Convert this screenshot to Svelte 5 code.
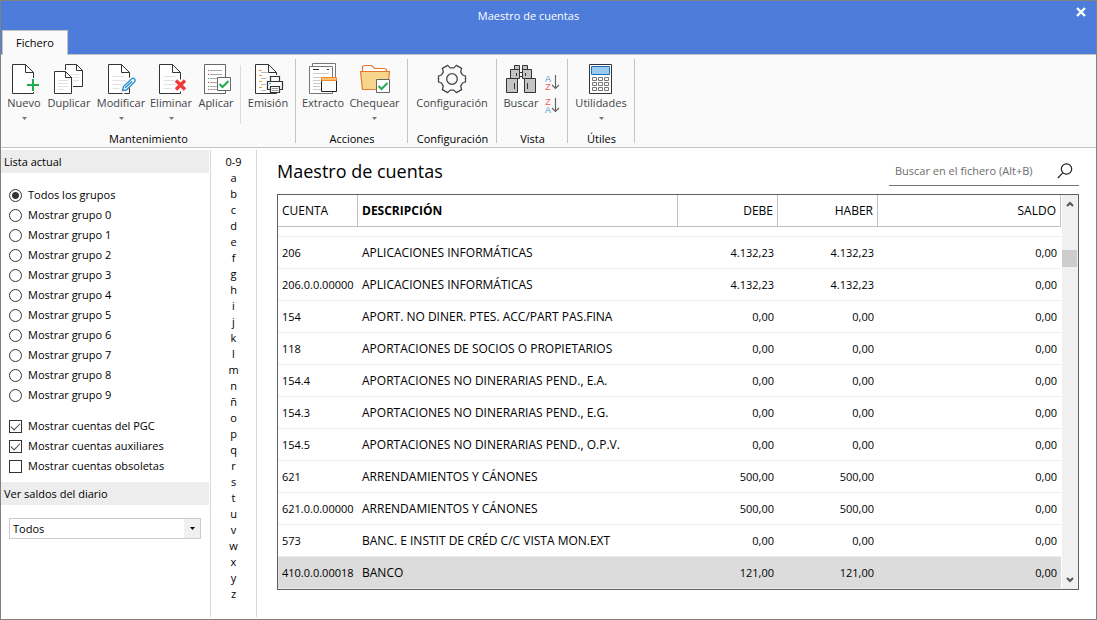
<script lang="ts">
	type Tool = { id: string; label: string; width: number; menu?: boolean; split?: boolean };

	const groups: { name: string; tools: Tool[] }[] = [
		{
			name: 'Mantenimiento',
			tools: [
				{ id: 'new', label: 'Nuevo', width: 38, menu: true },
				{ id: 'copy', label: 'Duplicar', width: 52 },
				{ id: 'edit', label: 'Modificar', width: 52, menu: true },
				{ id: 'delete', label: 'Eliminar', width: 48, menu: true },
				{ id: 'apply', label: 'Aplicar', width: 42 },
				{ id: 'print', label: 'Emisión', width: 46, split: true }
			]
		},
		{
			name: 'Acciones',
			tools: [
				{ id: 'extract', label: 'Extracto', width: 46 },
				{ id: 'check', label: 'Chequear', width: 57, menu: true }
			]
		},
		{ name: 'Configuración', tools: [{ id: 'config', label: 'Configuración', width: 80 }] },
		{
			name: 'Vista',
			tools: [
				{ id: 'search', label: 'Buscar', width: 40 },
				{ id: 'sort', label: '', width: 22 }
			]
		},
		{ name: 'Útiles', tools: [{ id: 'calc', label: 'Utilidades', width: 58, menu: true }] }
	];

	const filters = ['Todos los grupos', ...Array.from({ length: 10 }, (_, i) => `Mostrar grupo ${i}`)];
	const letters = ['0-9', ...'abcdefghijklmnñopqrstuvwxyz'];

	const rows = [
		['206', 'APLICACIONES INFORMÁTICAS', '4.132,23', '4.132,23', '0,00'],
		['206.0.0.00000', 'APLICACIONES INFORMÁTICAS', '4.132,23', '4.132,23', '0,00'],
		['154', 'APORT. NO DINER. PTES. ACC/PART PAS.FINA', '0,00', '0,00', '0,00'],
		['118', 'APORTACIONES DE SOCIOS O PROPIETARIOS', '0,00', '0,00', '0,00'],
		['154.4', 'APORTACIONES NO DINERARIAS PEND., E.A.', '0,00', '0,00', '0,00'],
		['154.3', 'APORTACIONES NO DINERARIAS PEND., E.G.', '0,00', '0,00', '0,00'],
		['154.5', 'APORTACIONES NO DINERARIAS PEND., O.P.V.', '0,00', '0,00', '0,00'],
		['621', 'ARRENDAMIENTOS Y CÁNONES', '500,00', '500,00', '0,00'],
		['621.0.0.00000', 'ARRENDAMIENTOS Y CÁNONES', '500,00', '500,00', '0,00'],
		['573', 'BANC. E INSTIT DE CRÉD C/C VISTA MON.EXT', '0,00', '0,00', '0,00'],
		['410.0.0.00018', 'BANCO', '121,00', '121,00', '0,00']
	];

	let group = $state('Todos los grupos');
	let pgc = $state(true);
	let auxiliary = $state(true);
	let obsolete = $state(false);
	let selected = $state(10);
	let balance = $state('Todos');
	let query = $state('');
</script>

{#snippet page(x: number)}
	<path d="M{x + 13} 2.5H{x}V31.5H{x + 21}V10.5L{x + 13} 2.5V10.5H{x + 21}" fill="#fff" stroke="#333" />
{/snippet}

{#snippet pageLines(x: number)}
	<path d="M{x + 4} 14.5h12M{x + 4} 18.5h13M{x + 4} 22.5h13M{x + 4} 26.5h8" stroke="#e2e2e2" />
{/snippet}

{#snippet icon(id: string)}
	<svg class="icon" width="32" height="32" viewBox="0 0 32 32" fill="none" aria-hidden="true">
		{#if id === 'new'}
			{@render page(4.5)}
			<path d="M25 16v14M18 23h14" stroke="#fafafa" stroke-width="6" />
			<path d="M25 17v12M19 23h12" stroke="#1faa50" stroke-width="2" />
		{:else if id === 'copy'}
			<path d="M23.5 2.5H12.5V24.5H29.5V8.5L23.5 2.5V8.5H29.5" fill="#fff" stroke="#333" />
			<path d="M18 12.5h8M20 15.5h6M20 18.5h6" stroke="#e2e2e2" />
			<path d="M0 8h13l7 7v17H0z" fill="#fafafa" />
			<path d="M12.5 9.5H1.5V31.5H18.5V15.5L12.5 9.5V15.5H18.5" fill="#fff" stroke="#333" />
			<path d="M5 18.5h10M5 21.5h10M5 24.5h10M5 27.5h6" stroke="#e2e2e2" />
		{:else if id === 'edit'}
			{@render page(3.5)}
			{@render pageLines(3.5)}
			<path d="M16 30l13-14" stroke="#fafafa" stroke-width="7" />
			<path d="M17.5 28.5l1-4L27 16.6q1.5-.8 2.6.4t.2 2.6L21.5 28l-4 .5zM20 26l7-6.8" fill="#fff" stroke="#2e8fd0" stroke-width="1.4" />
		{:else if id === 'delete'}
			{@render page(4.5)}
			{@render pageLines(4.5)}
			<path d="M20 17.5h12v12H20z" fill="#fafafa" />
			<path d="M21 18.5l9 9M30 18.5l-9 9" stroke="#ef3a3a" stroke-width="3.4" />
		{:else if id === 'apply'}
			<path d="M4.5 2.5h21v29h-21z" fill="#fff" stroke="#666" />
			<path d="M10 8.5h12M10 12.5h12M10 16.5h12M10 20.5h12M10 24.5h12M10 27.5h12" stroke="#aaa" />
			<path d="M8 8.5h1M8 16.5h1M8 24.5h1" stroke="#1f9a45" />
			<path d="M8 12.5h1M8 20.5h1M8 27.5h1" stroke="#d22" />
			<path d="M17.5 15.5h13v13h-13z" fill="#fff" stroke="#666" />
			<path d="M19.5 22l3 3 6-6" stroke="#1faa50" stroke-width="2" />
		{:else if id === 'print'}
			<path d="M16.5 2.5H3.5V31.5H24.5V10.5L16.5 2.5V10.5H24.5" fill="#fff" stroke="#333" />
			<path d="M7 8.5h3M7 13.5h3M7 19.5h3M7 25.5h3" stroke="#f0a020" />
			<path d="M9 10.5h7M9 16.5h6M9 22.5h6M9 28.5h6" stroke="#bbb" />
			<path d="M14 13h18v18H14z" fill="#fafafa" />
			<path d="M18.5 19.5v-5h9v5M18.5 27.5h-3v-8h15v8h-3M18.5 24.5h9v6h-9z" stroke="#333" stroke-width="1.2" />
			<path d="M20 26.5h6M20 28.5h6" stroke="#999" />
			<path d="M17 21.5h2" stroke="#2e8fd0" />
		{:else if id === 'extract'}
			<path d="M5.5 1.5h23v27h-23z" fill="#fff" stroke="#777" />
			<path d="M2.5 4.5h23v27h-23z" fill="#fff" stroke="#777" />
			<path d="M6 7.5h6M20 7.5h2" stroke="#333" />
			<path d="M6 11.5h16M6 15.5h8M6 18.5h7M6 21.5h8M6 24.5h7M6 27.5h8" stroke="#ccc" />
			<path d="M14.5 18.5h15v11h-15z" fill="#fff" stroke="#222" />
			<path d="M14.5 15.5h15v3h-15z" fill="#ffc070" stroke="#ef8a2c" />
		{:else if id === 'check'}
			<path d="M3.5 10V4.5l2-1h7l3 3h10l2 1V10" fill="#fff" stroke="#e8762c" stroke-width="1.2" />
			<path d="M3.5 27.5l-2-18h29l-2 18z" fill="#f6d68a" stroke="#e8762c" stroke-width="1.2" />
			<path d="M17.5 17.5h13v13h-13z" fill="#fff" stroke="#666" />
			<path d="M19.5 24l3 3 6-6" stroke="#1faa50" stroke-width="2" />
		{:else if id === 'config'}
			<g transform="translate(16 17)" stroke="#444" stroke-width="1.3" stroke-linejoin="round">
				<path d="M10.5-4L13.5-3V3L10.5 4L8.7 7.1L9.6 10.6L4.4 13.6L1.8 11.1H-1.8L-4.4 13.6L-9.6 10.6L-8.7 7.1L-10.5 4L-13.5 3V-3L-10.5-4L-8.7-7.1L-9.6-10.6L-4.4-13.6L-1.8-11.1H1.8L4.4-13.6L9.6-10.6L8.7-7.1Z" />
				<circle r="5.3" />
			</g>
		{:else if id === 'search'}
			<g fill="#c4c4c4" stroke="#333">
				<path d="M14.5 10.5h3v4h-3z" fill="#fff" />
				<path d="M9.5 3.5h5v4h-5zM17.5 3.5h5v4h-5z" />
				<path d="M5.5 7.5h9v9h-9zM17.5 7.5h9v9h-9z" />
				<path d="M1.5 16.5h11v14h-11zM19.5 16.5h11v14h-11z" />
				<path d="M9.5 21v6M22.5 21v6M11.5 11v3M20.5 11v3" />
			</g>
		{:else if id === 'calc'}
			<path d="M4.5 2.5h22v29h-22z" fill="#fff" stroke="#333" />
			<path d="M6.5 4.5h18v8h-18z" fill="#9accf0" stroke="#1d6fb5" />
			{#each [15.5, 20.5, 25.5] as y}
				<path d="M7.5 {y}h4v3h-4zM13.5 {y}h4v3h-4zM19.5 {y}h4v3h-4z" stroke="#777" />
			{/each}
		{/if}
	</svg>
{/snippet}

{#snippet sortIcon(top: string, bottom: string)}
	<svg width="18" height="18" viewBox="0 0 18 18" aria-hidden="true">
		<text x="5" y="8" class:a={top === 'A'}>{top}</text>
		<text x="5" y="16" class:a={bottom === 'A'}>{bottom}</text>
		<path d="M12.5 1v13M9 11l3.5 3.5L16 11" fill="none" stroke="#666" stroke-width="1.2" />
	</svg>
{/snippet}

<div class="window">
	<header class="titlebar">
		<div class="caption">
			<span class="caption-text">Maestro de cuentas</span>
			<button class="close" aria-label="Cerrar">
				<svg width="10" height="10" viewBox="0 0 10 10"><path d="M1 1l8 8M9 1l-8 8" stroke="#fff" stroke-width="2.4" /></svg>
			</button>
		</div>
		<button class="tab">Fichero</button>
	</header>

	<nav class="ribbon">
		{#each groups as g}
			<section class="group">
				<div class="tools">
					{#each g.tools as tool}
						{#if tool.id === 'sort'}
							<div class="sorts" style:width="{tool.width}px">
								<button aria-label="Orden ascendente">{@render sortIcon('A', 'Z')}</button>
								<button aria-label="Orden descendente">{@render sortIcon('Z', 'A')}</button>
							</div>
						{:else}
							{#if tool.split}<span class="split"></span>{/if}
							<button class="tool" style:width="{tool.width}px">
								{@render icon(tool.id)}
								<span>{tool.label}</span>
								{#if tool.menu}
									<svg class="arrow" width="5" height="3" viewBox="0 0 5 3"><path d="M0 0h5L2.5 3z" fill="#777" /></svg>
								{/if}
							</button>
						{/if}
					{/each}
				</div>
				<h2>{g.name}</h2>
			</section>
		{/each}
	</nav>

	<div class="body">
		<aside class="sidebar">
			<h3>Lista actual</h3>
			<div class="options">
				{#each filters as f}
					<label><input type="radio" name="group" value={f} bind:group />{f}</label>
				{/each}
			</div>
			<div class="options checks">
				<label><input type="checkbox" bind:checked={pgc} />Mostrar cuentas del PGC</label>
				<label><input type="checkbox" bind:checked={auxiliary} />Mostrar cuentas auxiliares</label>
				<label><input type="checkbox" bind:checked={obsolete} />Mostrar cuentas obsoletas</label>
			</div>
			<h3 id="balance-title">Ver saldos del diario</h3>
			<div class="select">
				<select bind:value={balance} aria-labelledby="balance-title">
					<option>Todos</option>
				</select>
				<span class="drop"><svg width="5" height="3" viewBox="0 0 5 3"><path d="M0 0h5L2.5 3z" /></svg></span>
			</div>
		</aside>

		<div class="letters">
			{#each letters as l}
				<button>{l}</button>
			{/each}
		</div>

		<main>
			<div class="head">
				<h1>Maestro de cuentas</h1>
				<div class="search">
					<input type="text" bind:value={query} placeholder="Buscar en el fichero (Alt+B)" aria-label="Buscar en el fichero" />
					<button aria-label="Buscar">
						<svg width="16" height="16" viewBox="0 0 16 16" fill="none" stroke="#222" stroke-width="1.2">
							<circle cx="9.5" cy="6" r="5.2" />
							<path d="M5.8 9.8L.8 15" />
						</svg>
					</button>
				</div>
			</div>

			<div class="grid">
				<table>
					<colgroup>
						<col class="c-account" /><col class="c-desc" /><col class="c-num" /><col class="c-num" /><col />
					</colgroup>
					<thead>
						<tr>
							<th>CUENTA</th>
							<th class="sorted">DESCRIPCIÓN</th>
							<th class="num">DEBE</th>
							<th class="num">HABER</th>
							<th class="num">SALDO</th>
						</tr>
					</thead>
					<tbody>
						<tr class="cut"><td colspan="5"></td></tr>
						{#each rows as row, i}
							<tr class:selected={i === selected} onclick={() => (selected = i)}>
								{#each row as cell, c}
									<td class:digits={c !== 1} class:num={c > 1}>{cell}</td>
								{/each}
							</tr>
						{/each}
					</tbody>
				</table>
				<div class="scroll">
					<button aria-label="Subir">
						<svg width="8" height="6" viewBox="0 0 8 6"><path d="M1 5l3-3 3 3" fill="none" stroke="#555" stroke-width="2" /></svg>
					</button>
					<div class="track"><div class="thumb"></div></div>
					<button aria-label="Bajar">
						<svg width="8" height="6" viewBox="0 0 8 6"><path d="M1 1l3 3 3-3" fill="none" stroke="#555" stroke-width="2" /></svg>
					</button>
				</div>
			</div>
		</main>
	</div>
</div>

<style>
	.window {
		box-sizing: border-box;
		min-height: 100vh;
		display: flex;
		flex-direction: column;
		border: 1px solid #808080;
		background: #fff;
		color: #000;
		font: 11px/16px "Segoe UI", "Open Sans", "Noto Sans", sans-serif;
	}
	button {
		font: inherit;
		color: inherit;
		background: none;
		border: 0;
		padding: 0;
		cursor: pointer;
	}
	svg {
		display: block;
	}
	h1, h2, h3 {
		margin: 0;
		font-size: 11px;
		font-weight: 400;
	}

	.titlebar {
		background: #4d7cdb;
		border-bottom: 1px solid #c4c4c4;
	}
	.caption {
		display: flex;
		height: 29px;
	}
	.caption-text {
		flex: 1;
		text-align: center;
		color: #fff;
		line-height: 30px;
	}
	.close {
		width: 40px;
		padding-left: 20px;
		padding-bottom: 8px;
	}
	.tab {
		display: block;
		width: 66px;
		height: 25px;
		margin: 0 0 -1px 1px;
		background: #fafafa;
		border: 1px solid #c4c4c4;
		border-bottom: 0;
	}

	.ribbon {
		display: flex;
		background: #fafafa;
		border-bottom: 1px solid #c4c4c4;
		padding: 4px 0;
	}
	.group {
		display: flex;
		flex-direction: column;
		padding: 0 4px;
		border-right: 1px solid #c4c4c4;
	}
	.group h2 {
		text-align: center;
		white-space: nowrap;
		line-height: 8px;
		margin: 0 -4px 0 -3px;
	}
	.tools {
		display: flex;
		height: 69px;
		padding-top: 3px;
		box-sizing: border-box;
		margin-bottom: 7px;
	}
	.tool {
		display: flex;
		flex-direction: column;
		align-items: center;
		color: #444;
		white-space: nowrap;
	}
	.tool span {
		margin-top: 1px;
	}
	.arrow {
		margin-top: 6px;
	}
	.split {
		width: 1px;
		height: 59px;
		margin: 3px 4px 0 3px;
		background: #dcdcdc;
	}
	.sorts {
		display: flex;
		flex-direction: column;
		align-items: center;
		gap: 5px;
		padding-top: 12px;
	}
	.sorts text {
		font-family: "Liberation Sans", Arial, sans-serif;
		font-size: 9px;
		text-anchor: middle;
		fill: #ee6060;
	}
	.sorts text.a {
		fill: #3f9bd8;
	}

	.body {
		flex: 1;
		display: flex;
		padding: 2px 0;
	}
	.sidebar {
		width: 208px;
	}
	.sidebar h3 {
		background: #ededed;
		padding: 0 3px;
		line-height: 23px;
	}
	.options {
		padding: 12px 8px 0;
	}
	.options.checks {
		padding: 11px 8px 6px;
	}
	.options label {
		display: flex;
		align-items: center;
		gap: 6px;
		height: 20px;
	}
	.options input {
		appearance: none;
		box-sizing: border-box;
		width: 13px;
		height: 13px;
		margin: 0;
		border: 1px solid #333;
		background: #fff;
		flex: none;
	}
	.options input[type='radio'] {
		border-radius: 50%;
	}
	.options input[type='radio']:checked {
		background: radial-gradient(circle, #333 3px, #fff 4px);
	}
	.options input[type='checkbox']:checked::before {
		content: '';
		display: block;
		width: 8px;
		height: 4px;
		margin: 2px 0 0 1px;
		border: solid #444;
		border-width: 0 0 1px 1px;
		transform: rotate(-45deg);
	}
	.select {
		position: relative;
		margin: 13px 8px 0;
	}
	.select select {
		appearance: none;
		display: block;
		width: 100%;
		height: 21px;
		padding: 0 20px 0 3px;
		border: 1px solid #ccc;
		border-radius: 0;
		background: #fff;
		color: #000;
		font: inherit;
	}
	.drop {
		position: absolute;
		inset: 1px 1px 1px auto;
		width: 16px;
		display: grid;
		place-items: center;
		background: #f0f0f0;
		pointer-events: none;
	}

	.letters {
		display: flex;
		flex-direction: column;
		width: 45px;
		margin-left: 1px;
		padding-top: 4px;
		border: solid #d8d8d8;
		border-width: 0 1px;
	}
	.letters button {
		height: 16px;
	}

	main {
		flex: 1;
		min-width: 0;
		padding: 4px 17px 0 20px;
	}
	.head {
		display: flex;
		justify-content: space-between;
		margin-bottom: 6px;
	}
	h1 {
		font-size: 18px;
		line-height: 34px;
	}
	.search {
		display: flex;
		align-items: center;
		width: 190px;
		height: 32px;
		box-sizing: border-box;
		padding: 2px 6px 0 6px;
		border-bottom: 1px solid #777;
	}
	.search input {
		flex: 1;
		min-width: 0;
		padding: 0;
		border: 0;
		outline: 0;
		background: none;
		font: inherit;
	}
	.search input::placeholder {
		color: #6d6d6d;
		opacity: 1;
	}

	.grid {
		display: flex;
		border: 1px solid #606060;
	}
	table {
		flex: 1;
		width: 100%;
		table-layout: fixed;
		border-collapse: separate;
		border-spacing: 0;
		font-size: 12px;
		line-height: 16px;
		margin-right: 1px;
	}
	.c-account {
		width: 80px;
	}
	.c-desc {
		width: 320px;
	}
	.c-num {
		width: 100px;
	}
	th, td {
		box-sizing: border-box;
		height: 32px;
		padding: 0 4px;
		text-align: left;
		font-weight: 400;
		white-space: nowrap;
	}
	th {
		border: solid #c0c0c0;
		border-width: 0 1px 1px 0;
	}
	td {
		border-bottom: 1px solid #ededed;
	}
	th.sorted {
		font-weight: 700;
	}
	.digits {
		font-size: 11px;
	}
	.num {
		text-align: right;
	}
	.cut td {
		height: 10px;
	}
	.selected td {
		background: #dcdcdc;
	}
	.scroll {
		display: flex;
		flex-direction: column;
		flex: none;
		width: 16px;
		background: #f0f0f0;
	}
	.scroll button {
		display: grid;
		place-items: center;
		height: 18px;
	}
	.track {
		flex: 1;
		padding-top: 37px;
	}
	.thumb {
		height: 17px;
		margin-right: 1px;
		background: #cdcdcd;
	}
</style>
